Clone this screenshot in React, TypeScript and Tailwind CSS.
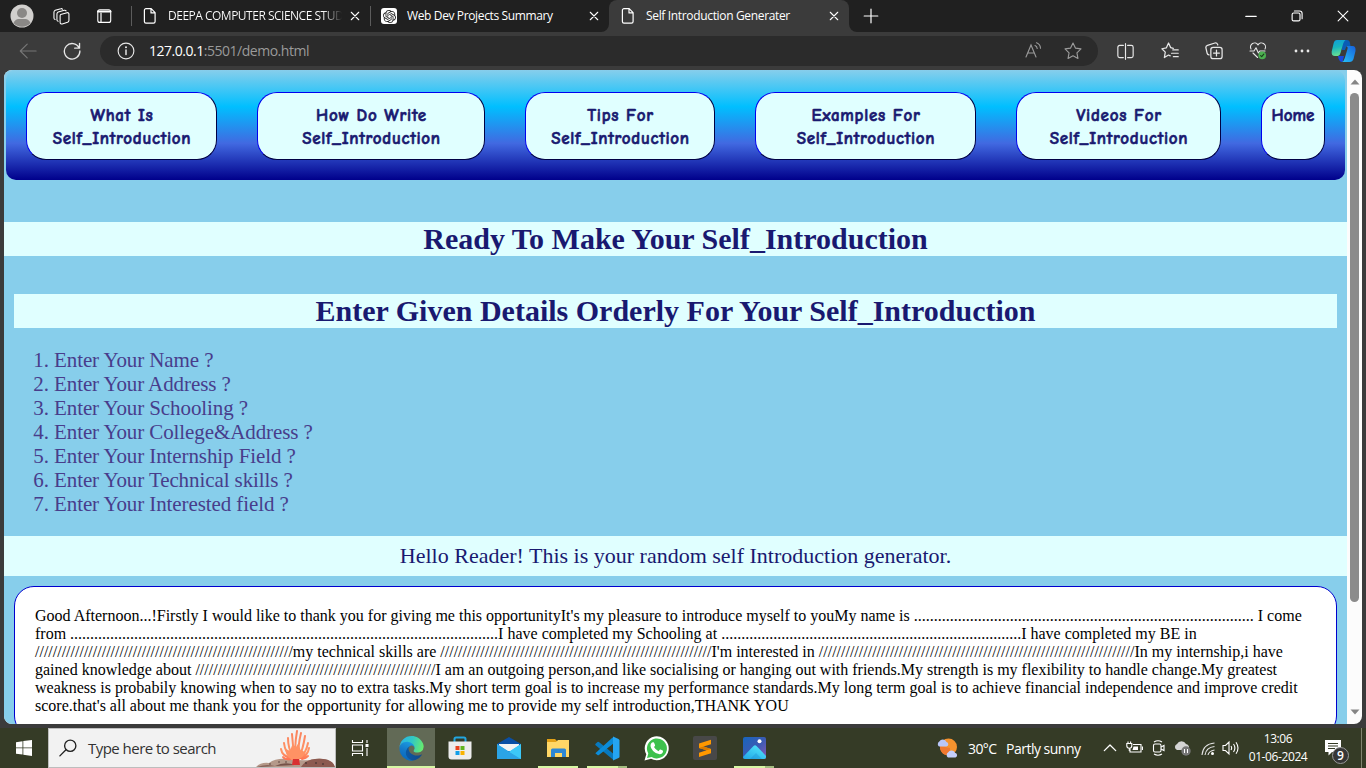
import type { ReactNode } from "react";
import { SiOpenai } from "react-icons/si";

const ui = "font-['Open_Sans','Noto_Sans',sans-serif]";

function Line({ size = 16, children, w = 1, className = "" }: { size?: number; children: ReactNode; w?: number; className?: string }) {
  return (
    <svg width={size} height={size} viewBox="0 0 16 16" fill="none" stroke="currentColor" strokeWidth={w} strokeLinejoin="round" strokeLinecap="round" className={`block shrink-0 ${className}`}>
      {children}
    </svg>
  );
}

const PageIcon = () => (
  <Line className="text-white">
    <path d="M4 .7h5.2l3.9 3.9v9a1.6 1.6 0 0 1-1.6 1.6H4a1.6 1.6 0 0 1-1.6-1.6V2.3A1.6 1.6 0 0 1 4 .7zM9 1v3.9h4" strokeWidth="1.2" />
  </Line>
);

const CloseIcon = () => (
  <Line size={10} className="text-white" w={1.7}>
    <path d="M2 2l12 12M14 2L2 14" />
  </Line>
);

function TitleBar() {
  return (
    <div className="flex h-8 items-center bg-[#202020] text-white">
      <svg width="24" height="24" viewBox="0 0 24 24" className="ml-[10px] shrink-0">
        <circle cx="12" cy="12" r="11.5" fill="#d2d0ce" />
        <circle cx="12" cy="9" r="5" fill="#8a8886" />
        <path d="M3.5 19q2-4 5-4h7q3 0 5 4a11.5 11.5 0 0 1-17 0z" fill="#8a8886" />
      </svg>
      <Line size={17} className="ml-[19px]">
        <path d="M7.2 6.1l6-1.7a1.5 1.5 0 0 1 1.8 1.1v6.2a2 2 0 0 1-1.3 1.7l-5 1.6a1.5 1.5 0 0 1-2-1.4V7.5a2 2 0 0 1 .5-1.4z" />
        <path d="M4.8 12.5a1.5 1.5 0 0 1-1.1-1.4V5.5a2 2 0 0 1 1.2-1.7l5.8-1.7a1.5 1.5 0 0 1 1.6.6M2 10.8A1.5 1.5 0 0 1 .9 9.4V3.8a2 2 0 0 1 1.2-1.7L7.4.7A1.5 1.5 0 0 1 9 1.2" />
      </Line>
      <Line size={16} className="ml-[26px]">
        <rect x="1.8" y="1.8" width="12.9" height="12.6" rx="2" strokeWidth="1.1" />
        <path d="M2 3.6h12.5" strokeWidth="2" /><path d="M5 5v9" strokeWidth="1.2" />
      </Line>
      <div className="ml-[19px] h-5 w-px bg-[#5c5c5c]" />
      <div className="flex w-[238px] shrink-0 items-center pl-[10px]">
        <PageIcon />
        <div className="ml-[10px] w-[174px] overflow-hidden bg-[linear-gradient(90deg,white_155px,transparent_174px)] bg-clip-text text-[12px] leading-4 tracking-[-0.5px] whitespace-nowrap text-transparent">DEEPA COMPUTER SCIENCE STUD</div>
        <div className="ml-[8px]"><CloseIcon /></div>
      </div>
      <div className="h-5 w-px shrink-0 bg-[#5c5c5c]" />
      <div className="flex w-[238px] shrink-0 items-center pl-[10px]">
        <span className="flex size-4 items-center justify-center rounded-[3px] bg-white text-[#222]"><SiOpenai size={13} /></span>
        <span className="ml-[10px] w-[182px] text-[12px] leading-4 tracking-[-0.37px] whitespace-nowrap">Web Dev Projects Summary</span>
        <CloseIcon />
      </div>
      <div className="relative flex h-8 w-[240px] shrink-0 items-center rounded-t-lg bg-[#3b3b3b] pl-[11px]">
        <svg className="absolute -left-2 bottom-0" width="8" height="8"><path d="M8 0v8H0a8 8 0 0 0 8-8z" fill="#3b3b3b" /></svg>
        <svg className="absolute -right-2 bottom-0" width="8" height="8"><path d="M0 0v8h8a8 8 0 0 1-8-8z" fill="#3b3b3b" /></svg>
        <PageIcon />
        <span className="ml-[10px] w-[183px] text-[12px] leading-4 tracking-[-0.34px] whitespace-nowrap">Self Introduction Generater</span>
        <CloseIcon />
      </div>
      <Line size={16} className="ml-[14px]"><path d="M8 1.2v13.6M1.2 8h13.6" strokeWidth="1.2" /></Line>
      <div className="ml-auto flex items-center pr-[17px]">
        <Line size={12}><path d="M1 8.5h14" strokeWidth="1.4" /></Line>
        <Line size={12} className="ml-[34px]" w={1.5}><rect x="1.5" y="4" width="10.5" height="10.5" rx="2" /><path d="M4.5 1.3h7a3.3 3.3 0 0 1 3.3 3.3v7" /></Line>
        <Line size={12} className="ml-[34px]" w={1.5}><path d="M1.5 1.5l13 13M14.5 1.5l-13 13" /></Line>
      </div>
    </div>
  );
}

function AddressBar() {
  return (
    <div className="flex h-[38px] items-center bg-[#3b3b3b] text-[#e8e8e8]">
      <Line size={18} className="ml-[19px] text-[#777]" w={1}><path d="M15.2 8H1.2M7.3 1.8L1.1 8l6.2 6.2" /></Line>
      <Line size={18} className="ml-[26px]" w={1.2}><path d="M14.3 5.2A6.900 6.900 0 1 0 15 8M14.700 1.200v4.300H10.400" /></Line>
      <div className="ml-[19px] flex h-[30px] w-[998px] items-center rounded-full bg-[#2b2b2b] pl-[17px]">
        <Line size={18} w={1}><circle cx="8" cy="8" r="7" /><path d="M8 7v4.2" strokeWidth="1.3" /><circle cx="8" cy="4.7" r=".4" fill="currentColor" /></Line>
        <span className="ml-[14px] text-[14px] leading-5 tracking-[-0.48px] whitespace-nowrap text-white">127.0.0.1<span className="text-[#9a9a9a]">:5501/demo.html</span></span>
        <svg width="17" height="18" viewBox="0 0 17 18" fill="none" stroke="#9b9b9b" strokeWidth="1.1" strokeLinecap="round" className="mr-[22px] ml-auto">
          <path d="M1 15L6 3l5 12M2.7 11h6.7M10 3.5q2 .8 2.2 3M11.5.8q3.7 1.4 4 5.4" />
        </svg>
        <Line size={18} className="mr-[16px] text-[#9b9b9b]" w={1}><path d="M8 .9l2.15 4.5 4.95.7-3.6 3.5.9 5L8 12.2l-4.4 2.4.9-5L.9 6.1l4.95-.7z" /></Line>
      </div>
      <Line size={17} className="ml-[19px]" w={1.1}><path d="M6 2.3H2.5A1.7 1.7 0 0 0 .8 4v8a1.7 1.7 0 0 0 1.7 1.7H6M10 2.3h3.5A1.7 1.7 0 0 1 15.2 4v8a1.7 1.7 0 0 1-1.7 1.7H10M8 .6v14.8" /></Line>
      <Line size={18} className="ml-[27px]" w={1.1}><path d="M11 5.6L8.6 5 6.7.9 4.8 5.2.8 6l3 3-.8 4.8 3.7-2.2 1.5.7M10.5 7h4.8M9.4 10h5.9M11 13h4.3" /></Line>
      <Line size={18} className="ml-[26px]" w={1.1}><rect x="5.2" y="4.8" width="10" height="10" rx="2" /><path d="M10.2 7.2v5.2M7.6 9.8h5.2M3.6 11.5A2 2 0 0 1 1.9 10L.8 5.2A2 2 0 0 1 2.2 3L8.8.9a2 2 0 0 1 2.4 1.2l.2.6" /></Line>
      <svg width="18" height="18" viewBox="0 0 18 18" fill="none" stroke="#e8e8e8" strokeWidth="1.1" strokeLinejoin="round" strokeLinecap="round" className="ml-[26px]">
        <path d="M2 7A4 4 0 0 1 9 3a4 4 0 0 1 7 4M1 9h4l2-3.2L9.4 11l1.4-2H16M4 11l4.6 4.5" />
        <circle cx="13.2" cy="13.4" r="3.8" fill="#4caf50" stroke="none" /><path d="M11.6 13.6l1.1 1 2.1-2.5" stroke="#183d19" />
      </svg>
      <svg width="16" height="6" viewBox="0 0 16 6" fill="#e8e8e8" className="ml-[27px]"><circle cx="2" cy="3" r="1.4" /><circle cx="8" cy="3" r="1.4" /><circle cx="14" cy="3" r="1.4" /></svg>
      <svg width="26" height="24" viewBox="0 0 26 24" className="ml-[21px]">
        <defs>
          <linearGradient id="cpa" x2=".2" y2="1"><stop stopColor="#109dd8" /><stop offset=".5" stopColor="#18b6bd" /><stop offset="1" stopColor="#65dd94" /></linearGradient>
          <linearGradient id="cpb" x1="1" x2=".2" y2="1"><stop stopColor="#1660dc" /><stop offset="1" stopColor="#24b8f4" /></linearGradient>
        </defs>
        <path d="M9 1h7q2.500 0 3 3l.5 3h-4l-1.500 4h-3z" fill="#0a5cb5" />
        <path d="M6 1h8.500q-1.500 1-2.300 3.500L9.500 14q-.8 3-2.500 3H4q-3.800 0-3.300-4.500L2.700 4q.8-3 3.300-3z" fill="url(#cpa)" />
        <path d="M7 17h6l-1.500 6q-3.500.3-4.500-6z" fill="#1948df" />
        <path d="M15 7h6.500q3.500 0 3 5l-2 8q-1 3-4 3H11q2-1 2.800-4l2.700-9q.7-2.500-1.500-3z" fill="url(#cpb)" />
      </svg>
    </div>
  );
}

const links = [
  { top: "What Is", box: "w-[191px]" },
  { top: "How Do Write", box: "w-[228px]" },
  { top: "Tips For", box: "w-[190px]" },
  { top: "Examples For", box: "w-[221px]" },
  { top: "Videos For", box: "w-[205px]" },
];
const navBox = "h-[68px] shrink-0 rounded-[20px] border border-t-[#0000ee] border-l-[#0000ee] border-r-[#000044] border-b-[#000044] bg-[#e0ffff] pt-[11px] text-center text-[17px] leading-[23px] font-bold whitespace-nowrap text-[#191970] [-webkit-text-stroke:0.6px_#191970]";

const questions = ["Name ?", "Address ?", "Schooling ?", "College&Address ?", "Internship Field ?", "Technical skills ?", "Interested field ?"];

const intro = [
  "Good Afternoon...!Firstly I would like to thank you for giving me this opportunityIt's my pleasure to introduce myself to youMy name is " + ".".repeat(85) + " I come",
  "from " + ".".repeat(107) + "I have completed my Schooling at " + ".".repeat(75) + "I have completed my BE in",
  "/".repeat(58) + "my technical skills are " + "/".repeat(61) + "I'm interested in " + "/".repeat(71) + "In my internship,i have",
  "gained knowledge about " + "/".repeat(54) + "I am an outgoing person,and like socialising or hanging out with friends.My strength is my flexibility to handle change.My greatest",
  "weakness is probabily knowing when to say no to extra tasks.My short term goal is to increase my performance standards.My long term goal is to achieve financial independence and improve credit",
  "score.that's all about me thank you for the opportunity for allowing me to provide my self introduction,THANK YOU",
];

function Page() {
  return (
    <div className="h-[658px] bg-[#3b3b3b] px-1 pb-1">
      <div className="flex h-[654px] overflow-hidden rounded-lg bg-[#fcfcfc]">
        <div className="h-full w-[1343px] shrink-0 overflow-hidden bg-[#87ceeb] font-['Liberation_Serif',serif]">
          <nav className="mx-[2px] flex h-[110px] gap-10 rounded-[10px] bg-[linear-gradient(#87ceeb,#00bfff,#4169e1,#00008b)] px-5 pt-[22px] font-['Comic_Sans_MS','Comic_Neue','Lato',sans-serif]">
            {links.map((l) => (
              <div key={l.top} className={`${navBox} ${l.box}`}>
                <div className="pl-px tracking-[0.75px]">{l.top}</div>
                <div className="pl-px tracking-[0.72px]">Self_Introduction</div>
              </div>
            ))}
            <div className={`${navBox} w-16`}>Home</div>
          </nav>
          <h1 className="mt-[42px] h-[34px] bg-[#e0ffff] text-center text-[30px] leading-[34px] font-bold text-[#191970]">Ready To Make Your Self_Introduction</h1>
          <h1 className="mx-[10px] mt-[38px] h-[34px] bg-[#e0ffff] text-center text-[30px] leading-[34px] font-bold text-[#191970]">Enter Given Details Orderly For Your Self_Introduction</h1>
          <ol className="mt-5 ml-[50px] list-decimal text-[21px] leading-6 tracking-[-0.09px] text-[#483d8b]">
            {questions.map((q) => <li key={q}>Enter Your {q}</li>)}
          </ol>
          <p className="mt-5 h-10 bg-[#e0ffff] text-center text-[22px] leading-10 text-[#191970]">Hello Reader! This is your random self Introduction generator.</p>
          <div className="mx-[10px] mt-[10px] h-[150px] rounded-[20px] border border-[#0000cd] bg-white px-5 pt-5 text-[16px] leading-[18px] whitespace-nowrap text-black">
            {intro.map((t) => <div key={t}>{t}</div>)}
          </div>
        </div>
        <div className="flex w-[15px] flex-col items-center">
          <svg width="10" height="6" viewBox="0 0 10 6" className="mt-[9px] shrink-0"><path d="M.5 5.500L5 .5l4.500 5z" fill="#858585" /></svg>
          <div className="mt-2 h-[509px] w-[9px] shrink-0 rounded-full bg-[#8b8b8b]" />
          <svg width="10" height="6" viewBox="0 0 10 6" className="mt-auto mb-[9px] shrink-0"><path d="M.5.5L5 5.500 9.500.5z" fill="#858585" /></svg>
        </div>
      </div>
    </div>
  );
}

function EdgeLogo() {
  return (
    <svg width="25" height="25" viewBox="0 0 264 264">
      <defs>
        <linearGradient id="ea" x1="0" x2="1"><stop stopColor="#0c59a4" /><stop offset="1" stopColor="#114a8b" /></linearGradient>
        <linearGradient id="eb" x1=".6" y1="0" x2=".3" y2="1"><stop stopColor="#1b9de2" /><stop offset=".5" stopColor="#1478c8" /><stop offset="1" stopColor="#0668bc" /></linearGradient>
        <linearGradient id="ec" x1="0" y1=".3" x2="1" y2=".5"><stop stopColor="#28b4e9" /><stop offset=".5" stopColor="#32c8c4" /><stop offset="1" stopColor="#66eb6e" /></linearGradient>
      </defs>
      <path fill="url(#ea)" d="M235.680 195.460a93.730 93.730 0 0 1-10.540 4.710 101.870 101.870 0 0 1-35.900 6.460c-47.320 0-88.540-32.550-88.540-74.320A31.480 31.480 0 0 1 117.130 105c-42.800 1.800-53.800 46.400-53.800 72.530 0 73.880 68.090 81.370 82.760 81.370 7.910 0 19.840-2.300 27-4.560l1.310-.44a128.340 128.340 0 0 0 66.600-52.800 4 4 0 0 0-5.320-5.640z" />
      <path fill="url(#eb)" d="M110.340 246.340A79.200 79.200 0 0 1 87.600 225a80.720 80.720 0 0 1 29.530-120c3.120-1.470 8.450-4.130 15.540-4a32.350 32.350 0 0 1 25.690 13 31.880 31.880 0 0 1 6.360 18.660c0-.21 24.460-79.600-80-79.600-43.900 0-80 41.660-80 78.210a130.150 130.150 0 0 0 12.110 56 128 128 0 0 0 156.380 67.110 75.550 75.550 0 0 1-62.780-8z" />
      <path fill="url(#ec)" d="M156.940 153.780c-.81 1.050-3.300 2.500-3.300 5.660 0 2.610 1.700 5.120 4.720 7.230 14.380 10 41.490 8.680 41.560 8.680a59.560 59.560 0 0 0 30.270-8.350 61.380 61.380 0 0 0 30.430-52.880c.26-22.410-8-37.310-11.340-43.910C228.090 28.760 182.350.29 132.610.29a128 128 0 0 0-128 126.200c.48-36.540 36.800-66.050 80-66.050 3.500 0 23.460.34 42 10.070 16.340 8.580 24.900 18.940 30.850 29.210 6.180 10.670 7.280 24.150 7.280 29.520 0 5.370-2.740 13.330-7.800 19.540z" />
    </svg>
  );
}

const StoreLogo = () => (
  <svg width="24" height="24" viewBox="0 0 24 24">
    <path d="M6.500 7V3q0-1.500 1.500-1.500h8q1.500 0 1.500 1.500v4" fill="none" stroke="#22a7e0" strokeWidth="2" />
    <path d="M.5 5.500h23v15q0 3-3 3h-17q-3 0-3-3z" fill="#ededed" />
    <path d="M7.500 10h4v4h-4z" fill="#e8431f" /><path d="M12.500 10h4v4h-4z" fill="#62b51f" /><path d="M7.500 15h4v4h-4z" fill="#139fe8" /><path d="M12.500 15h4v4h-4z" fill="#f9b300" />
  </svg>
);
const MailLogo = () => (
  <svg width="24" height="24" viewBox="0 0 24 24">
    <path d="M0 8L12 1l12 7-12 9z" fill="#0a4fa5" /><path d="M2 8h20v7H2z" fill="#f3f3f3" />
    <path d="M0 8l12 8L24 8v15H0z" fill="#35b6ee" /><path d="M0 8l24 15H0z" fill="#2ba4e6" /><path d="M24 8L12 15.800 24 23z" fill="#3cc8f8" />
  </svg>
);
const FolderLogo = () => (
  <svg width="24" height="24" viewBox="0 0 24 24">
    <path d="M1 3h8l2 2v3H1z" fill="#e3a117" /><path d="M1 6h9l2-2h11v17H1z" fill="#ffd766" /><path d="M5 14q0-1.500 1.500-1.500h12Q20 12.500 20 14v7h-4v-4H9v4H5z" fill="#2c87d4" />
  </svg>
);
const CodeLogo = () => (
  <svg width="25" height="25" viewBox="0 0 25 25">
    <path d="M.6 7.700L2.500 6q.7-.5 1.400 0L19 18.200v5.500q-1 0-2-.9L.6 9.200q-.8-.7 0-1.500z" fill="#0879bd" />
    <path d="M.6 17L17 2q1-.8 2-.8v5.700L3.900 18.900q-.7.500-1.400 0L.6 17.500q-.5-.2 0-.5z" fill="#0b8cd8" />
    <path d="M18 .5l5.500 2.400q1 .5 1 1.500v16q0 1-1 1.500L18 24.500z" fill="#25a5f1" />
  </svg>
);
const WhatsAppLogo = () => (
  <svg width="25" height="25" viewBox="0 0 25 25">
    <path d="M.5 24.500l1.800-6.300A12 12 0 1 1 7 22.800z" fill="#fff" />
    <path d="M3 22l1.300-4.500A10 10 0 1 1 7.600 20.900z" fill="#3dc14d" />
    <path d="M7.700 6.800q.7-1 1.800-.5.400.1.700.8l.8 2q.2.500-.1.900l-.9 1.100q1.500 2.900 4.500 4.100l1.200-1.500q.4-.4.800-.2l2.200 1.100q.5.300.3 1-.5 2.700-3.300 2.700-3.600-.3-6.600-3.400-2.600-3-2.600-5 0-2 1.200-3.100z" fill="#fff" />
  </svg>
);
const SublimeLogo = () => (
  <svg width="24" height="24" viewBox="0 0 24 24">
    <rect width="24" height="24" rx="2" fill="#484848" />
    <path d="M6 7.500L18 3.700v4.500l-7.500 2.400L18 13v4.300L6 21v-4.300l7.500-2.400L6 12z" fill="#ff9800" /><path d="M6 12l7.500 2.300L18 13l-7.500-2.400z" fill="#d97a00" />
  </svg>
);
const PhotosLogo = () => (
  <svg width="23" height="24" viewBox="0 0 23 24">
    <defs>
      <linearGradient id="ph" x2="1" y2="1"><stop stopColor="#1765bd" /><stop offset=".5" stopColor="#3a5bb4" /><stop offset="1" stopColor="#875ab7" /></linearGradient>
      <linearGradient id="phm" x1="0" y1="1" x2=".7" y2=".2"><stop stopColor="#1c9fe4" /><stop offset="1" stopColor="#4adcf8" /></linearGradient>
      <clipPath id="phc"><rect y="1" width="23" height="22" rx="2" /></clipPath>
    </defs>
    <g clipPath="url(#phc)">
      <rect y="1" width="23" height="22" fill="url(#ph)" />
      <path d="M-1 22L10.500 10q1.500-1.500 3 0L26 23v2H-1z" fill="url(#phm)" /><path d="M13 17l8 8H5z" fill="#1480cc" opacity=".3" />
    </g>
    <circle cx="16.500" cy="5.200" r="2" fill="#fff" />
  </svg>
);

const apps: { name: string; icon: ReactNode; bar?: string; cell: string; tail?: boolean }[] = [
  { name: "edge", icon: <EdgeLogo />, bar: "w-12", cell: "bg-[#626a56]" },
  { name: "store", icon: <StoreLogo />, cell: "" },
  { name: "mail", icon: <MailLogo />, cell: "" },
  { name: "files", icon: <FolderLogo />, bar: "w-10", cell: "" },
  { name: "code", icon: <CodeLogo />, bar: "w-[31px]", cell: "", tail: true },
  { name: "whatsapp", icon: <WhatsAppLogo />, cell: "" },
  { name: "sublime", icon: <SublimeLogo />, cell: "" },
  { name: "photos", icon: <PhotosLogo />, bar: "w-[31px]", cell: "", tail: true },
];

function Reef() {
  return (
    <svg width="79" height="38" viewBox="0 0 79 38" className="ml-auto self-end">
      <defs><linearGradient id="reef" x1="0" y1="0" x2="0" y2="38" gradientUnits="userSpaceOnUse"><stop stopColor="#f9805c" /><stop offset=".6" stopColor="#ff9566" /><stop offset="1" stopColor="#ff5540" /></linearGradient></defs>
      <path d="M0 38q5-5 13-4 7-5 18-4 14 2 23 1 10-3 16 0 7 1 9 7z" fill="#b5998a" />
      <path d="M45 38q4-7 14-8 11-1 15 2 4 2 5 6z" fill="#8c5a50" />
      <path d="M1 38q8-3 18-1 10-5 20-1z" fill="#765148" />
      <g fill="none" stroke="url(#reef)" strokeWidth="2" strokeLinecap="round" strokeLinejoin="round">
        <path d="M40 30Q38 20 41 2M38.500 30Q37 18 36 5M37 27Q32 20 32 9M36 28Q29 24 28 14M35 29Q26 27 25 20M35 30Q29 31 27 28M42 30Q42 16 45 4M43 29Q47 20 49 7M44 29Q50 24 52 14M45 29Q52 26 53 19M46 30Q50 29 52 27" />
      </g>
      <path d="M32 28q-3-4-2-8l4 2 2.500-7 3.500 3 2.500-4 2 7 4.500 2q-1 5-5.500 6.500V32h-6z" fill="#ff9264" />
      <path d="M37 30h6l1 6h-8z" fill="#d92f31" />
      <g fill="#553c38"><circle cx="14" cy="35" r=".8" /><circle cx="23" cy="33" r=".8" /><circle cx="30" cy="33" r=".8" /><circle cx="50" cy="34" r="1" /><circle cx="60" cy="34" r="1" /><circle cx="67" cy="35" r="1" /></g>
    </svg>
  );
}

function Taskbar() {
  return (
    <div className="flex h-10 items-center bg-[#353b26] text-white">
      <svg width="16" height="16" viewBox="0 0 16 16" fill="#fff" className="mx-4 shrink-0"><path d="M0 2.200L6.500 1.200v6.300H0zM7.300 1.100L16 0v7.500H7.300zM0 8.300h6.500v6.300L0 13.700zM7.300 8.300H16V16l-8.700-1.200z" /></svg>
      <div className="flex h-10 w-72 shrink-0 items-center border border-[#bdbdbd] bg-[#f2f2f2] pl-[10px] text-[#333]">
        <Line size={18} w={1.2} className="text-[#222]"><circle cx="10" cy="6" r="5" /><path d="M6.200 9.600L.8 15" /></Line>
        <span className="ml-[11px] text-[15px] leading-5 tracking-[-0.53px] whitespace-nowrap">Type here to search</span>
        <Reef />
      </div>
      <svg width="18" height="18" viewBox="0 0 18 18" fill="none" stroke="#fff" strokeWidth="1.100" className="ml-[15px] mr-[18px] shrink-0">
        <path d="M1.500 1v2.500h10V1M1.500 17v-2.500h10V17M1.500 6h10v6h-10zM16 1v3M16 9v8" /><path d="M14.500 5h3v3h-3z" fill="#fff" stroke="none" />
      </svg>
      <div className="flex gap-px">
        {apps.map((a) => (
          <div key={a.name} className={`relative flex h-10 w-12 items-center justify-center ${a.cell}`}>
            {a.icon}
            {a.bar && (
              <div className="absolute inset-x-0 bottom-0 flex h-[2px] justify-center">
                <div className={`bg-[#d6f7a4] ${a.bar}`} />
                {a.tail && <div className="w-[9px] bg-[#a3bd80]" />}
              </div>
            )}
          </div>
        ))}
      </div>
      <div className="ml-auto flex h-10 shrink-0 items-center">
        <svg width="22" height="20" viewBox="0 0 22 20"><circle cx="12.500" cy="9" r="8.500" fill="#f5922e" /><path d="M4 8a8.500 8.500 0 0 0 10 9.300V10z" fill="#ef7830" /><path d="M3 8.500a3 3 0 0 1 .3-5A4 4 0 0 1 10.500 4a2.300 2.300 0 0 1 0 4.500z" fill="#b9c6f8" /><path d="M12 19.500a3 3 0 0 1 0-5 4 4 0 0 1 7 .2 2.500 2.500 0 0 1 .5 4.800z" fill="#c3cefb" /></svg>
        <span className="ml-[10px] w-[38px] text-[14px] tracking-[-0.6px] whitespace-nowrap">30°C</span>
        <span className="w-[97px] text-[14px] tracking-[-0.5px] whitespace-nowrap">Partly sunny</span>
        <Line size={14} w={1.5}><path d="M1.500 11L8 4.500l6.500 6.500" /></Line>
        <svg width="17" height="16" viewBox="0 0 17 16" fill="none" stroke="#fff" strokeWidth="1.100" className="ml-[9px]"><path d="M7 4.500h8v7.500H4V8.500M16.500 6.500v3.500" /><path d="M.8 3.500h5v2.200a2.500 2.500 0 0 1-5 0zM2 1.500v2M4.600 1.500v2M3.300 8v3" /><path d="M7.500 6.500H12V10H6.500z" fill="#fff" stroke="none" /></svg>
        <svg width="14" height="18" viewBox="0 0 14 18" fill="none" stroke="#fff" strokeWidth="1.100" className="ml-[9px]"><path d="M2 3q4-2.500 8 0M2 15q4 2.500 8 0" /><rect x="1.500" y="5" width="7.500" height="8" rx="1.500" /><path d="M9 8l3-1.500v5L9 10" /></svg>
        <svg width="18" height="16" viewBox="0 0 18 16" className="ml-[8px]"><path d="M3 10a3.200 3.200 0 0 1 0-6 5 5 0 0 1 9 0 3.500 3.500 0 0 1 2 6z" fill="#d4d4d4" /><circle cx="12" cy="11" r="4.700" fill="#777" /><path d="M10.500 9v4M13.500 9v4" stroke="#fff" /></svg>
        <svg width="15" height="15" viewBox="0 0 15 15" fill="none" stroke="#e4e4e4" strokeWidth="1.100" className="ml-[9px]"><path d="M1 14Q2 3 13.500 2M4 14q1-7.500 9.500-8.500M7 14q.8-4 6.500-5" /><circle cx="11.500" cy="12.500" r="1.500" fill="#fff" stroke="none" /></svg>
        <svg width="18" height="16" viewBox="0 0 18 16" fill="none" stroke="#fff" strokeWidth="1.100" className="ml-[6px]"><path d="M1 5.500h2.500L7 2v12l-3.500-3.500H1zM9 6q1.300 2 0 4M11.500 4q2.800 4 0 8M14 2.200q4 5.800 0 11.600" /></svg>
        <div className="ml-[6px] w-[64px] text-center text-[12px] leading-[18px] tracking-[-0.4px] whitespace-nowrap"><div>13:06</div><div>01-06-2024</div></div>
        <div className="relative ml-[10px] h-10 w-[46px]">
          <svg width="16" height="16" viewBox="0 0 16 16" className="absolute top-[12px] left-[5px]"><path d="M0 0h16v12H7l-3.500 3.500V12H0z" fill="#fff" /><path d="M3 3.500h10M3 6h10M3 8.500h7" stroke="#353b26" /></svg>
          <span className="absolute top-[19px] left-[12px] flex size-[17px] items-center justify-center rounded-full border border-[#999] bg-[#363636] text-[12px] leading-none font-semibold">9</span>
          <div className="absolute top-0 right-[4px] h-10 w-px bg-[#808570]" />
        </div>
      </div>
    </div>
  );
}

export default function App() {
  return (
    <div className={`h-[768px] w-[1366px] overflow-hidden ${ui}`}>
      <TitleBar />
      <AddressBar />
      <Page />
      <Taskbar />
    </div>
  );
}
